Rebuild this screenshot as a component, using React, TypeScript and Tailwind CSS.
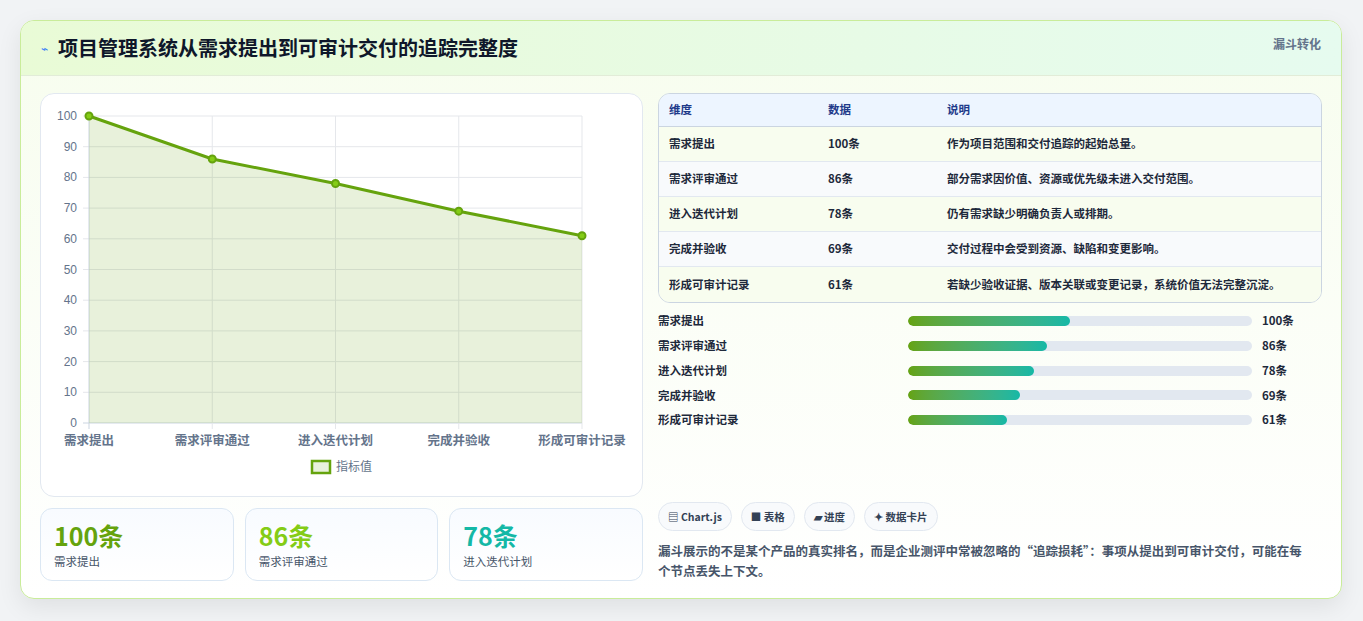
import React from "react";

const rows = [
  ["需求提出", "100条", "作为项目范围和交付追踪的起始总量。", 100],
  ["需求评审通过", "86条", "部分需求因价值、资源或优先级未进入交付范围。", 86],
  ["进入迭代计划", "78条", "仍有需求缺少明确负责人或排期。", 78],
  ["完成并验收", "69条", "交付过程中会受到资源、缺陷和变更影响。", 69],
  ["形成可审计记录", "61条", "若缺少验收证据、版本关联或变更记录，系统价值无法完整沉淀。", 61],
] as const;

function Chart() {
  const x0 = 48, x1 = 541, y0 = 22, y1 = 329;
  const xs = [0, 1, 2, 3, 4].map((i) => x0 + ((x1 - x0) * i) / 4);
  const y = (v: number) => y1 - ((y1 - y0) * v) / 100;
  const pts = rows.map((r, i) => [xs[i], y(r[3])]);
  const line = pts.map((p) => p.join(",")).join(" ");
  return (
    <svg width="602" height="403" className="block" style={{ fontFamily: "'Liberation Sans','Noto Sans CJK SC',sans-serif" }}>
      {[0, 10, 20, 30, 40, 50, 60, 70, 80, 90, 100].map((v) => (
        <g key={v}>
          <line x1={x0 - 6} x2={x1} y1={y(v)} y2={y(v)} stroke={v === 0 ? "#cbd5e1" : "#e5e7eb"} />
          <text x={x0 - 12} y={y(v) + 4} textAnchor="end" fontSize="12" fill="#64748b">{v}</text>
        </g>
      ))}
      {xs.map((x, i) => (
        <line key={i} x1={x} x2={x} y1={y0} y2={y1 + 6} stroke={i === 0 ? "#cbd5e1" : "#e5e7eb"} />
      ))}
      <polygon points={`${x0},${y1} ${line} ${x1},${y1}`} fill="rgba(101,163,13,0.15)" />
      <polyline points={line} fill="none" stroke="#65a30d" strokeWidth="3" />
      {pts.map((p, i) => (
        <circle key={i} cx={p[0]} cy={p[1]} r="3.5" fill="#84cc16" stroke="#65a30d" strokeWidth="2" />
      ))}
      {rows.map((r, i) => (
        <text key={i} x={xs[i]} y={351} textAnchor="middle" fontSize="12.5" fill="#64748b" fontWeight="600" style={{ fontFamily: "'Noto Sans CJK SC',sans-serif" }}>{r[0]}</text>
      ))}
      <rect x="271" y="367" width="18" height="12" fill="rgba(101,163,13,0.15)" stroke="#65a30d" strokeWidth="2.5" />
      <text x="295" y="377" fontSize="12" fill="#64748b" style={{ fontFamily: "'Noto Sans CJK SC',sans-serif" }}>指标值</text>
    </svg>
  );
}

export default function App() {
  const stats = [
    ["100条", "需求提出", "text-[#65a30d]"],
    ["86条", "需求评审通过", "text-[#84cc16]"],
    ["78条", "进入迭代计划", "text-[#14b8a6]"],
  ];
  return (
    <div className="w-[1363px] h-[621px] bg-[#f1f3f5] pt-[20px] pl-[20px]" style={{ fontFamily: "'Noto Sans CJK SC','Noto Sans',sans-serif" }}>
      <div className="w-[1322px] h-[579px] rounded-[14px] border border-[#c9ec9a] bg-gradient-to-b from-[#f7fdee] to-white shadow-[0_8px_24px_rgba(0,0,0,0.08)] overflow-hidden">
        <div className="h-[55px] flex items-center justify-between px-[20px] border-b border-[#e2ecd8] bg-gradient-to-r from-[#e9fbd6] to-[#e6fbef]">
          <div className="flex items-center gap-[10px]">
            <span className="text-[#3b82f6] text-[12px]">⌁</span>
            <span className="text-[20px] font-bold text-[#0f172a]">项目管理系统从需求提出到可审计交付的追踪完整度</span>
          </div>
          <span className="self-start mt-[14px] text-[12px] font-bold text-[#64748b]">漏斗转化</span>
        </div>
        <div className="flex gap-[15px] px-[19px] pt-[17px]">
          <div className="w-[603px] flex flex-col gap-[11px]">
            <div className="h-[404px] rounded-[14px] border border-[#e2e8f0] bg-white"><Chart /></div>
            <div className="grid grid-cols-3 gap-[11px]">
              {stats.map(([v, l, c]) => (
                <div key={l} className="h-[73px] rounded-[12px] border border-[#dbe7f3] bg-gradient-to-b from-[#f8fbff] to-white px-[13px] pt-[10px]">
                  <div className={`text-[25px] leading-[32px] font-bold ${c}`}>{v}</div>
                  <div className="text-[11.5px] text-[#475569] mt-[2px]">{l}</div>
                </div>
              ))}
            </div>
          </div>
          <div className="w-[667px] flex flex-col">
            <div className="rounded-[12px] border border-[#cbd5e1] overflow-hidden text-[11.5px]">
              <div className="flex h-[33px] items-center bg-[#edf5ff] border-b border-[#cbd5e1] font-bold text-[#1e3a8a]">
                <div className="w-[169px] pl-[10px]">维度</div><div className="w-[119px]">数据</div><div>说明</div>
              </div>
              {rows.map((r, i) => (
                <div key={i} className={`flex h-[35px] items-center font-semibold text-[#1e293b] ${i < 4 ? "border-b border-[#e2e8f0]" : ""} ${i % 2 ? "bg-[#f8fafc]" : "bg-[#f8fdef]"}`}>
                  <div className="w-[169px] pl-[10px]">{r[0]}</div><div className="w-[119px]">{r[1]}</div><div>{r[2]}</div>
                </div>
              ))}
            </div>
            <div className="mt-[10px] flex flex-col gap-[8.75px]">
              {rows.map((r, i) => (
                <div key={i} className="flex items-center h-[16px] text-[11.5px] font-semibold text-[#1e293b]">
                  <div className="w-[250px]">{r[0]}</div>
                  <div className="w-[344px] h-[10px] rounded-full bg-[#e2e8f0] overflow-hidden">
                    <div className="h-full rounded-full bg-gradient-to-r from-[#65a30d] to-[#14b8a6]" style={{ width: `${r[3] * 0.47}%` }} />
                  </div>
                  <div className="ml-[10px] font-bold">{r[1]}</div>
                </div>
              ))}
            </div>
            <div className="mt-[74px] flex gap-[9px] text-[10.5px] font-bold text-[#334155]">
              {["▤ Chart.js", "■ 表格", "▰ 进度", "✦ 数据卡片"].map((t) => (
                <span key={t} className="h-[29px] px-[9px] flex items-center rounded-full border border-[#e2e8f0] bg-[#f8fafc]">{t}</span>
              ))}
            </div>
            <p className="mt-[10px] text-[12.5px] leading-[20px] font-semibold text-[#475569] pr-[10px]">漏斗展示的不是某个产品的真实排名，而是企业测评中常被忽略的“追踪损耗”：事项从提出到可审计交付，可能在每个节点丢失上下文。</p>
          </div>
        </div>
      </div>
    </div>
  );
}
